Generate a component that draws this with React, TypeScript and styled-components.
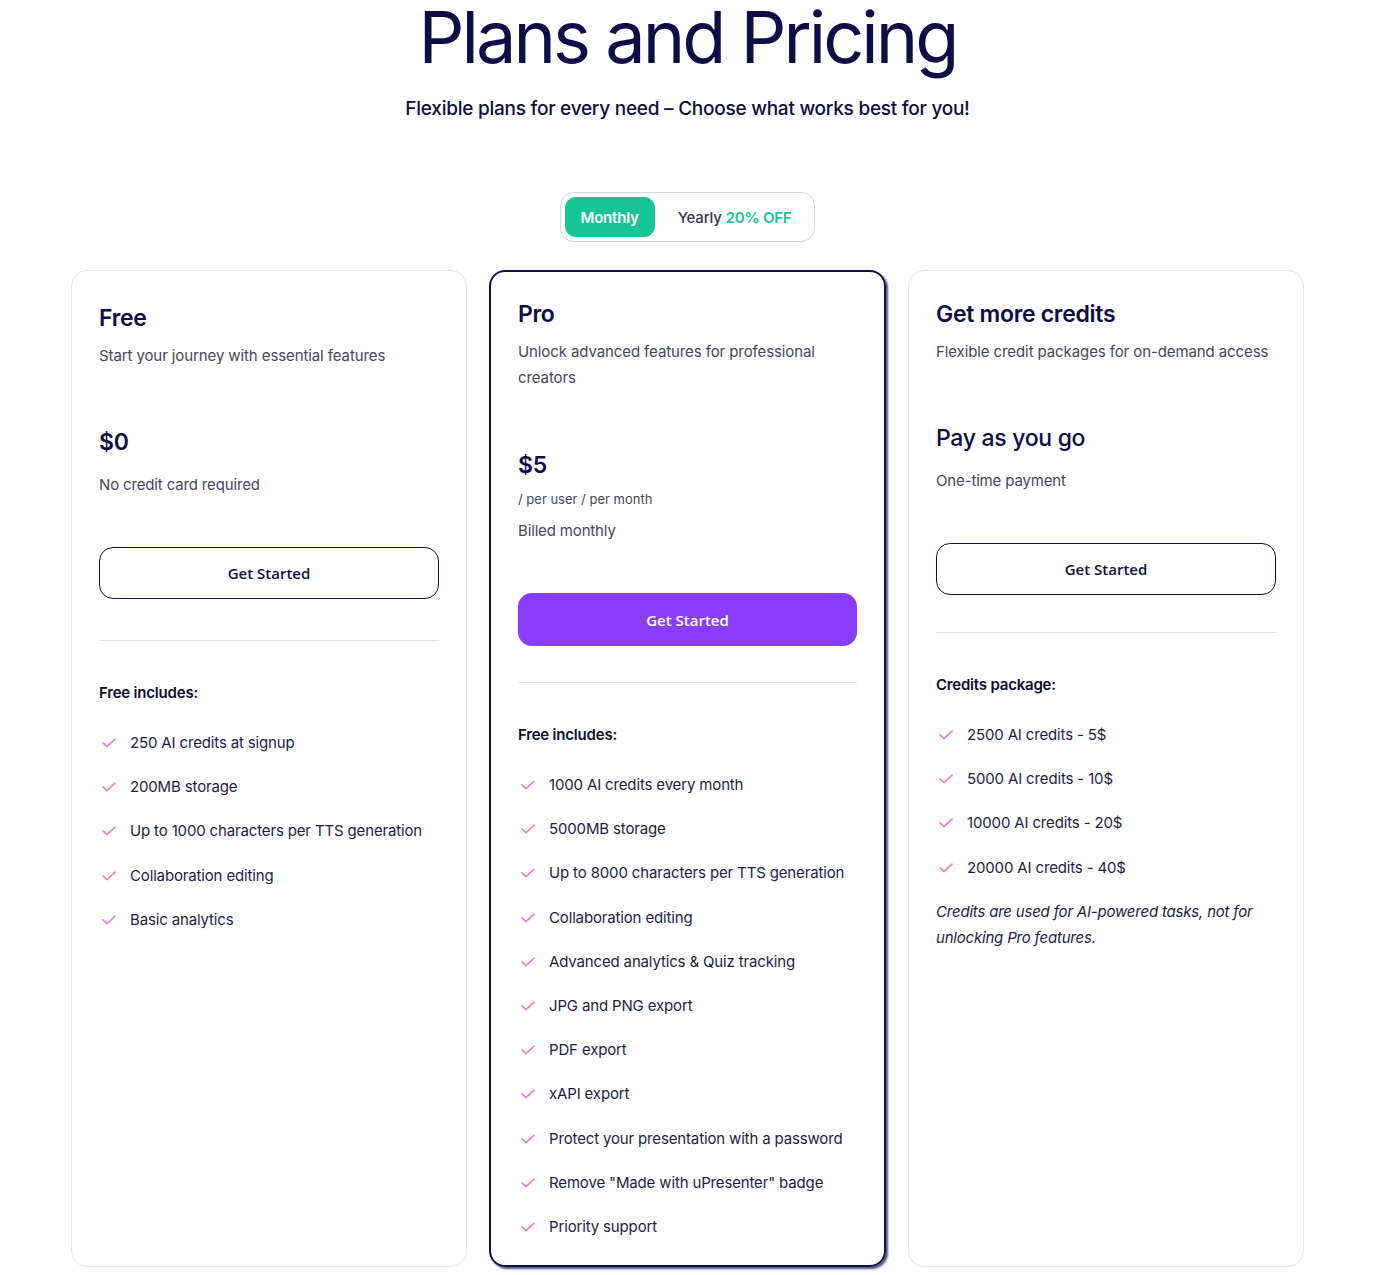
import styled, { createGlobalStyle } from "styled-components";

const GlobalStyle = createGlobalStyle`
  body {
    margin: 0;
    background: #ffffff;
    font-family: "Inter", "Noto Sans", sans-serif;
    color: #0f0f45;
  }
`;

const Page = styled.div`
  width: 1375px;
  display: flex;
  flex-direction: column;
  align-items: center;
  padding-bottom: 8px;
`;

const Title = styled.h1`
  margin: 0;
  font-size: 72px;
  line-height: 74px;
  font-weight: 400;
  letter-spacing: -3px;
  color: #0d0d47;
`;

const Subtitle = styled.p`
  margin: 22px 0 0;
  font-size: 19px;
  line-height: 26px;
  font-weight: 500;
  letter-spacing: -0.25px;
  color: #0d0d3f;
`;

const Toggle = styled.div`
  margin-top: 70px;
  display: flex;
  align-items: center;
  gap: 23px;
  padding: 4px 23px 4px 4px;
  border: 1px solid #d6d6e0;
  border-radius: 14px;
  height: 40px;
`;

const ToggleOption = styled.div<{ $active?: boolean }>`
  height: 40px;
  display: flex;
  align-items: center;
  border-radius: 11px;
  font-size: 15px;
  font-weight: ${(p) => (p.$active ? 600 : 500)};
  letter-spacing: -0.2px;
  background: ${(p) => (p.$active ? "#17c494" : "transparent")};
  color: ${(p) => (p.$active ? "#ffffff" : "#34344f")};
  padding: ${(p) => (p.$active ? "0 16px" : "0")};
`;

const Off = styled.span`
  color: #17c494;
  font-weight: 600;
  margin-left: 4px;
`;

const Cards = styled.div`
  margin-top: 28px;
  display: grid;
  grid-template-columns: 396px 397px 396px;
  column-gap: 22px;
  align-items: stretch;
`;

const Card = styled.div<{ $featured?: boolean; $top: number }>`
  border-radius: 16px;
  padding: ${(p) => p.$top}px 27px 27px;
  border: ${(p) => (p.$featured ? "2px solid #10104a" : "1px solid #e6e6ec")};
  box-shadow: ${(p) =>
    p.$featured ? "2px 2px 2px rgba(16, 16, 74, 0.7)" : "none"};
  display: flex;
  flex-direction: column;
`;

const PlanName = styled.h2`
  margin: 0;
  font-size: 23px;
  line-height: 30px;
  font-weight: 600;
  letter-spacing: -0.3px;
  color: #0d0d47;
`;

const PlanDesc = styled.p`
  margin: 10px 0 0;
  font-size: 15px;
  line-height: 26px;
  font-weight: 400;
  letter-spacing: -0.1px;
  color: #45455f;
`;

const Price = styled.div<{ $gap: number }>`
  margin-top: ${(p) => p.$gap}px;
  font-size: 23px;
  line-height: 30px;
  font-weight: 600;
  letter-spacing: -0.3px;
  color: #0d0d47;
`;

const PayGo = styled(Price)`
  font-weight: 500;
`;

const Unit = styled.div`
  margin-top: 9px;
  font-size: 13px;
  line-height: 20px;
  color: #45455f;
`;

const Note = styled.p<{ $gap: number }>`
  margin: ${(p) => p.$gap}px 0 0;
  font-size: 15px;
  line-height: 22px;
  letter-spacing: -0.15px;
  color: #45455f;
`;

const Button = styled.button<{ $primary?: boolean }>`
  margin-top: 51px;
  width: 100%;
  border-radius: 14px;
  font-family: "Open Sans", sans-serif;
  font-size: 15px;
  font-weight: 600;
  cursor: pointer;
  border: ${(p) => (p.$primary ? "none" : "1px solid #10104a")};
  background: ${(p) => (p.$primary ? "#8a3dff" : "#ffffff")};
  color: ${(p) => (p.$primary ? "#ffffff" : "#10104a")};
  height: ${(p) => (p.$primary ? "53px" : "52px")};
`;

const Divider = styled.hr<{ $gap: number }>`
  margin: ${(p) => p.$gap}px 0 0;
  border: none;
  border-top: 1px solid #e3e3ea;
`;

const ListHeading = styled.div`
  margin-top: 41px;
  font-size: 15px;
  line-height: 22px;
  font-weight: 600;
  letter-spacing: -0.2px;
  color: #0d0d2f;
`;

const List = styled.ul`
  list-style: none;
  margin: 28px 0 0;
  padding: 0;
  display: flex;
  flex-direction: column;
  gap: 22.2px;
`;

const Item = styled.li`
  display: flex;
  align-items: center;
  gap: 14px;
  font-size: 15px;
  line-height: 22px;
  letter-spacing: -0.15px;
  color: #1c1c48;
`;

const CheckBox = styled.span`
  width: 15px;
  display: flex;
  justify-content: center;
  padding-left: 2px;
`;

const Footnote = styled.p`
  margin: 20px 0 0;
  font-size: 15px;
  line-height: 26px;
  font-style: italic;
  letter-spacing: -0.2px;
  color: #1c1c48;
`;

function Check() {
  return (
    <CheckBox>
      <svg width="14" height="10" viewBox="0 0 14 10" fill="none">
        <path
          d="M1 4.8 L5 8.6 L13 1.2"
          stroke="#f07dd3"
          strokeWidth="1.6"
          strokeLinecap="round"
          strokeLinejoin="round"
        />
      </svg>
    </CheckBox>
  );
}

const freeFeatures = [
  "250 AI credits at signup",
  "200MB storage",
  "Up to 1000 characters per TTS generation",
  "Collaboration editing",
  "Basic analytics",
];

const proFeatures = [
  "1000 AI credits every month",
  "5000MB storage",
  "Up to 8000 characters per TTS generation",
  "Collaboration editing",
  "Advanced analytics & Quiz tracking",
  "JPG and PNG export",
  "PDF export",
  "xAPI export",
  "Protect your presentation with a password",
  'Remove "Made with uPresenter" badge',
  "Priority support",
];

const credits = [
  "2500 AI credits - 5$",
  "5000 AI credits - 10$",
  "10000 AI credits - 20$",
  "20000 AI credits - 40$",
];

function Features({ items }: { items: string[] }) {
  return (
    <List>
      {items.map((f) => (
        <Item key={f}>
          <Check />
          {f}
        </Item>
      ))}
    </List>
  );
}

export default function App() {
  return (
    <>
      <GlobalStyle />
      <Page>
        <Title>Plans and Pricing</Title>
        <Subtitle>
          Flexible plans for every need – Choose what works best for you!
        </Subtitle>
        <Toggle>
          <ToggleOption $active>Monthly</ToggleOption>
          <ToggleOption>
            Yearly<Off>20% OFF</Off>
          </ToggleOption>
        </Toggle>

        <Cards>
          <Card $top={32}>
            <PlanName>Free</PlanName>
            <PlanDesc>Start your journey with essential features</PlanDesc>
            <Price $gap={58}>$0</Price>
            <Note $gap={17}>No credit card required</Note>
            <Button>Get Started</Button>
            <Divider $gap={41} />
            <ListHeading>Free includes:</ListHeading>
            <Features items={freeFeatures} />
          </Card>

          <Card $featured $top={27}>
            <PlanName>Pro</PlanName>
            <PlanDesc>Unlock advanced features for professional creators</PlanDesc>
            <Price $gap={59}>$5</Price>
            <Unit>/ per user / per month</Unit>
            <Note $gap={11}>Billed monthly</Note>
            <Button $primary>Get Started</Button>
            <Divider $gap={36} />
            <ListHeading>Free includes:</ListHeading>
            <Features items={proFeatures} />
          </Card>

          <Card $top={28}>
            <PlanName>Get more credits</PlanName>
            <PlanDesc>Flexible credit packages for on-demand access</PlanDesc>
            <PayGo $gap={58}>Pay as you go</PayGo>
            <Note $gap={17}>One-time payment</Note>
            <Button>Get Started</Button>
            <Divider $gap={37} />
            <ListHeading>Credits package:</ListHeading>
            <Features items={credits} />
            <Footnote>
              Credits are used for AI-powered tasks, not for unlocking Pro
              features.
            </Footnote>
          </Card>
        </Cards>
      </Page>
    </>
  );
}
